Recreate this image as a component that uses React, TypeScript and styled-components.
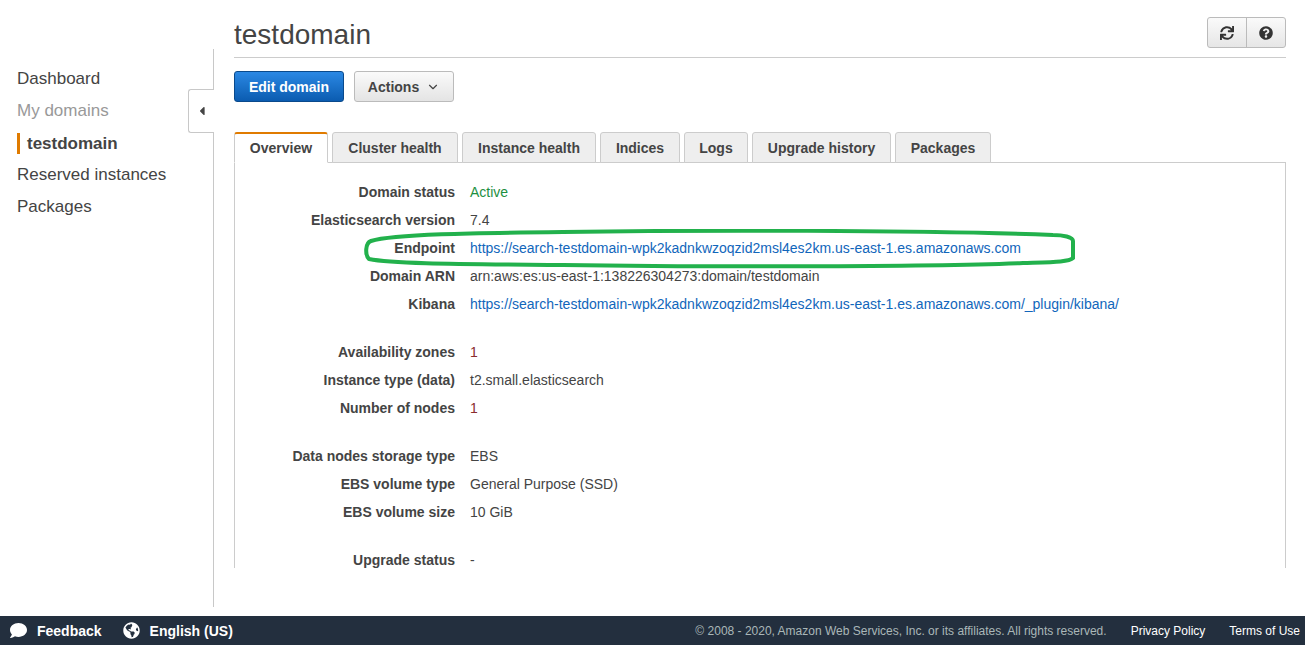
import React from "react";
import styled, { createGlobalStyle } from "styled-components";
import { FaSync, FaQuestionCircle, FaComment, FaGlobeAmericas, FaCaretLeft } from "react-icons/fa";
import { LuChevronDown } from "react-icons/lu";

const Global = createGlobalStyle`
  html, body { margin: 0; padding: 0; background: #fff; }
  body { font-family: "Liberation Sans", Arial, sans-serif; color: #444; }
  * { box-sizing: border-box; }
`;

const Page = styled.div`
  width: 1305px;
  height: 645px;
  display: flex;
  flex-direction: column;
  overflow: hidden;
`;
const Body = styled.div`
  height: 616px;
  display: flex;
`;
const SideColumn = styled.div`
  width: 214px;
  padding-top: 49px;
  height: 607px;
  flex: none;
`;
const Side = styled.nav`
  position: relative;
  height: 558px;
  border-right: 1px solid #c8c8c8;
  padding-top: 14px;
  display: flex;
  flex-direction: column;
`;
const NavItem = styled.div<{ $muted?: boolean }>`
  height: 32px;
  line-height: 32px;
  padding-left: 17px;
  font-size: 17px;
  color: ${(p) => (p.$muted ? "#999" : "#444")};
`;
const NavActive = styled.div`
  height: 21px;
  margin: 5.5px 0 5.5px 17px;
  padding-left: 7px;
  border-left: 3px solid #e07b00;
  line-height: 21px;
  font-size: 17px;
  font-weight: bold;
  color: #444;
`;
const Toggle = styled.div`
  position: absolute;
  left: 188px;
  top: 40px;
  width: 26px;
  height: 44px;
  background: #fff;
  border: 1px solid #c8c8c8;
  border-right: none;
  border-radius: 3px 0 0 3px;
  display: flex;
  align-items: center;
  justify-content: center;
  color: #444;
  font-size: 14px;
`;
const Main = styled.main`
  width: 1052px;
  margin-left: 20px;
  display: flex;
  flex-direction: column;
`;
const Header = styled.header`
  height: 58px;
  border-bottom: 1px solid #ccc;
  display: flex;
  justify-content: space-between;
  align-items: flex-start;
`;
const Title = styled.h1`
  margin: 18px 0 0;
  font-size: 28px;
  line-height: 34px;
  font-weight: normal;
  color: #444;
`;
const IconGroup = styled.div`
  margin-top: 17px;
  display: flex;
  height: 31px;
  width: 79px;
  border: 1px solid #bbb;
  border-radius: 3px;
  background: linear-gradient(#fafafa, #e6e6e6);
`;
const IconButton = styled.div`
  flex: 1;
  display: flex;
  align-items: center;
  justify-content: center;
  color: #333;
  font-size: 14px;
  & + & { border-left: 1px solid #bbb; }
`;
const Actions = styled.div`
  display: flex;
  gap: 10px;
  margin-top: 13px;
`;
const Button = styled.div<{ $primary?: boolean }>`
  height: 31px;
  border-radius: 3px;
  display: flex;
  align-items: center;
  justify-content: center;
  gap: 7px;
  font-size: 14px;
  font-weight: bold;
  width: ${(p) => (p.$primary ? "110px" : "100px")};
  color: ${(p) => (p.$primary ? "#fff" : "#444")};
  border: 1px solid ${(p) => (p.$primary ? "#0a4a8c" : "#bbb")};
  background: ${(p) => (p.$primary ? "linear-gradient(#2b88e4, #0b5cb0)" : "linear-gradient(#fafafa, #e4e4e4)")};
`;
const Tabs = styled.div`
  display: flex;
  gap: 4px;
  margin-top: 30px;
  height: 31px;
  border-bottom: 1px solid #ccc;
`;
const Tab = styled.div<{ $active?: boolean; $w: number }>`
  width: ${(p) => p.$w}px;
  height: 31px;
  margin-bottom: -1px;
  display: flex;
  align-items: center;
  justify-content: center;
  font-size: 14px;
  font-weight: bold;
  color: #444;
  border: 1px solid #ccc;
  border-radius: 3px 3px 0 0;
  background: ${(p) => (p.$active ? "#fff" : "#eee")};
  ${(p) => (p.$active ? "border-top: 2px solid #e07b00; border-bottom-color: #fff; border-left-color:#ccc;" : "border-bottom-color:#ccc;")}
`;
const Panel = styled.section`
  position: relative;
  height: 405px;
  border-left: 1px solid #ccc;
  border-right: 1px solid #ccc;
  padding-top: 15px;
  overflow: visible;
`;
const Group = styled.div`
  & + & { margin-top: 20px; }
`;
const Row = styled.div`
  height: 28px;
  display: flex;
  align-items: center;
  font-size: 14px;
  color: #444;
`;
const Label = styled.div`
  width: 220px;
  text-align: right;
  font-weight: bold;
`;
const Value = styled.div<{ $tone?: "green" | "link" | "num" }>`
  margin-left: 15px;
  color: ${(p) =>
    p.$tone === "green" ? "#1d8f3f" : p.$tone === "link" ? "#1166bb" : p.$tone === "num" ? "#8a2c2c" : "#444"};
`;
const Ring = styled.svg`
  position: absolute;
  left: 128px;
  top: 66px;
  width: 714px;
  height: 40px;
  pointer-events: none;
`;
const Footer = styled.footer`
  height: 29px;
  background: #232f3e;
  display: flex;
  align-items: center;
  font-size: 14px;
  font-weight: bold;
  color: #fff;
  padding: 0 5px 0 10px;
`;
const FootIcon = styled.span<{ $gap: number }>`
  display: flex;
  font-size: 17px;
  margin-right: ${(p) => p.$gap}px;
`;
const FootItem = styled.span`
  margin-right: 21px;
`;
const Spacer = styled.div`
  flex: 1;
`;
const Copy = styled.span`
  font-size: 12px;
  font-weight: normal;
  color: #aab7b8;
  margin-right: 24px;
`;
const FootLink = styled.span`
  font-size: 12px;
  font-weight: normal;
  color: #fff;
  & + & { margin-left: 24px; }
`;

const rows: { label: string; value: string; tone?: "green" | "link" | "num" }[][] = [
  [
    { label: "Domain status", value: "Active", tone: "green" },
    { label: "Elasticsearch version", value: "7.4" },
    { label: "Endpoint", value: "https://search-testdomain-wpk2kadnkwzoqzid2msl4es2km.us-east-1.es.amazonaws.com", tone: "link" },
    { label: "Domain ARN", value: "arn:aws:es:us-east-1:138226304273:domain/testdomain" },
    { label: "Kibana", value: "https://search-testdomain-wpk2kadnkwzoqzid2msl4es2km.us-east-1.es.amazonaws.com/_plugin/kibana/", tone: "link" },
  ],
  [
    { label: "Availability zones", value: "1", tone: "num" },
    { label: "Instance type (data)", value: "t2.small.elasticsearch" },
    { label: "Number of nodes", value: "1", tone: "num" },
  ],
  [
    { label: "Data nodes storage type", value: "EBS" },
    { label: "EBS volume type", value: "General Purpose (SSD)" },
    { label: "EBS volume size", value: "10 GiB" },
  ],
  [{ label: "Upgrade status", value: "-" }],
];

const tabs = [
  { t: "Overview", w: 94 },
  { t: "Cluster health", w: 126 },
  { t: "Instance health", w: 134 },
  { t: "Indices", w: 80 },
  { t: "Logs", w: 64 },
  { t: "Upgrade history", w: 139 },
  { t: "Packages", w: 96 },
];

export default function App() {
  return (
    <Page>
      <Global />
      <Body>
        <SideColumn>
          <Side>
            <NavItem>Dashboard</NavItem>
            <NavItem $muted>My domains</NavItem>
            <NavActive>testdomain</NavActive>
            <NavItem>Reserved instances</NavItem>
            <NavItem>Packages</NavItem>
            <Toggle>
              <FaCaretLeft />
            </Toggle>
          </Side>
        </SideColumn>
        <Main>
          <Header>
            <Title>testdomain</Title>
            <IconGroup>
              <IconButton>
                <FaSync />
              </IconButton>
              <IconButton>
                <FaQuestionCircle />
              </IconButton>
            </IconGroup>
          </Header>
          <Actions>
            <Button $primary>Edit domain</Button>
            <Button>
              Actions <LuChevronDown size={14} />
            </Button>
          </Actions>
          <Tabs>
            {tabs.map((t, i) => (
              <Tab key={t.t} $w={t.w} $active={i === 0}>
                {t.t}
              </Tab>
            ))}
          </Tabs>
          <Panel>
            {rows.map((g, i) => (
              <Group key={i}>
                {g.map((r) => (
                  <Row key={r.label}>
                    <Label>{r.label}</Label>
                    <Value $tone={r.tone}>{r.value}</Value>
                  </Row>
                ))}
              </Group>
            ))}
            <Ring viewBox="0 0 714 40">
              <path
                d="M8 12 C 30 5, 110 4, 200 3 C 330 1, 560 1, 690 6 C 700 6, 710 8, 710 12 L 710 29 C 706 33, 690 33, 660 34 C 560 38, 330 38, 200 36 C 100 35, 30 35, 6 30 C 2 26, 2 14, 8 12 Z"
                fill="none"
                stroke="#22b14c"
                strokeWidth="4"
              />
            </Ring>
          </Panel>
        </Main>
      </Body>
      <Footer>
        <FootIcon $gap={10}>
          <FaComment />
        </FootIcon>
        <FootItem>Feedback</FootItem>
        <FootIcon $gap={10}>
          <FaGlobeAmericas />
        </FootIcon>
        <span>English (US)</span>
        <Spacer />
        <Copy>© 2008 - 2020, Amazon Web Services, Inc. or its affiliates. All rights reserved.</Copy>
        <FootLink>Privacy Policy</FootLink>
        <FootLink>Terms of Use</FootLink>
      </Footer>
    </Page>
  );
}
